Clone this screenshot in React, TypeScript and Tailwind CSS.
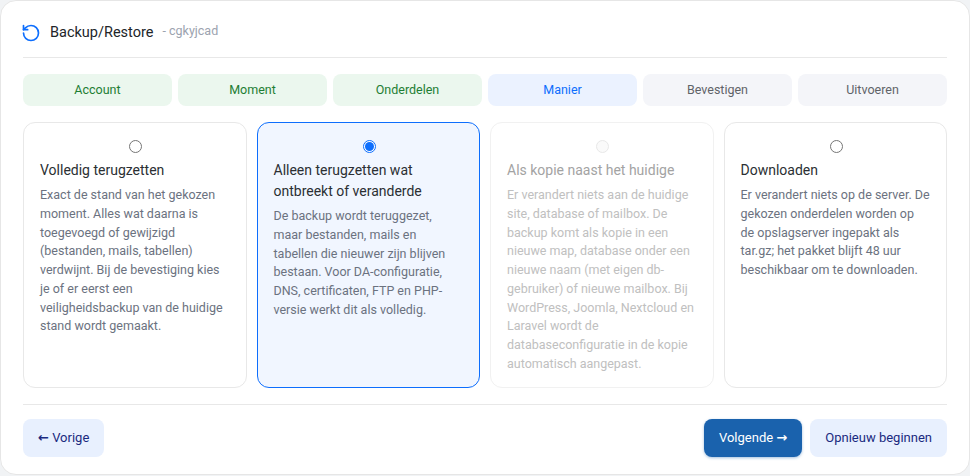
import { RotateCcw } from 'lucide-react';

const STEPS = [
  { label: 'Account', cls: 'bg-[#ebf7ee] text-[#1e7e34]' },
  { label: 'Moment', cls: 'bg-[#ebf7ee] text-[#1e7e34]' },
  { label: 'Onderdelen', cls: 'bg-[#ebf7ee] text-[#1e7e34]' },
  { label: 'Manier', cls: 'bg-[#ebf2ff] text-[#0d6efd]' },
  { label: 'Bevestigen', cls: 'bg-[#f4f5f9] text-[#5f6368]' },
  { label: 'Uitvoeren', cls: 'bg-[#f4f5f9] text-[#5f6368]' },
];

const OPTIONS = [
  {
    title: 'Volledig terugzetten',
    text: 'Exact de stand van het gekozen moment. Alles wat daarna is toegevoegd of gewijzigd (bestanden, mails, tabellen) verdwijnt. Bij de bevestiging kies je of er eerst een veiligheidsbackup van de huidige stand wordt gemaakt.',
  },
  {
    title: 'Alleen terugzetten wat ontbreekt of veranderde',
    text: 'De backup wordt teruggezet, maar bestanden, mails en tabellen die nieuwer zijn blijven bestaan. Voor DA-configuratie, DNS, certificaten, FTP en PHP-versie werkt dit als volledig.',
    selected: true,
  },
  {
    title: 'Als kopie naast het huidige',
    text: 'Er verandert niets aan de huidige site, database of mailbox. De backup komt als kopie in een nieuwe map, database onder een nieuwe naam (met eigen db-gebruiker) of nieuwe mailbox. Bij WordPress, Joomla, Nextcloud en Laravel wordt de databaseconfiguratie in de kopie automatisch aangepast.',
    disabled: true,
  },
  {
    title: 'Downloaden',
    text: 'Er verandert niets op de server. De gekozen onderdelen worden op de opslagserver ingepakt als tar.gz; het pakket blijft 48 uur beschikbaar om te downloaden.',
  },
];

function Radio({ selected, disabled }: { selected?: boolean; disabled?: boolean }) {
  if (selected) {
    return (
      <span className="ml-[2px] w-[13px] h-[13px] rounded-full border border-[#0d6efd] bg-white flex items-center justify-center">
        <span className="w-[9px] h-[9px] rounded-full bg-[#0d6efd]" />
      </span>
    );
  }
  return (
    <span
      className={`ml-[2px] w-[13px] h-[13px] rounded-full border ${
        disabled ? 'border-[#e8e8e8] bg-[#fafafa]' : 'border-[#767676] bg-white'
      }`}
    />
  );
}

export default function App() {
  return (
    <div className="w-[970px] h-[476px] bg-[#f1f3f5] font-['Roboto','DejaVu_Sans',sans-serif]">
      <div className="h-[475px] w-[970px] bg-white border border-[#e6e6e6] rounded-[16px] px-[22px] flex flex-col">
        {/* Header */}
        <div className="h-[57px] border-b border-[#e8e8e8] flex items-center pt-[7px] shrink-0">
          <RotateCcw className="w-[20px] h-[20px] text-[#0d6efd] -ml-[2px]" strokeWidth={2} />
          <span className="ml-[9px] text-[14.5px] text-[#212529]">Backup/Restore</span>
          <span className="ml-[9px] text-[12.5px] text-[#9ca3af] -mt-[3px]">- cgkyjcad</span>
        </div>

        {/* Steps */}
        <div className="flex gap-[6px] mt-[16px] shrink-0">
          {STEPS.map((step) => (
            <div
              key={step.label}
              className={`flex-1 h-[32px] rounded-[8px] flex items-center justify-center text-[12.5px] ${step.cls}`}
            >
              {step.label}
            </div>
          ))}
        </div>

        {/* Options */}
        <div className="grid grid-cols-4 gap-[10px] mt-[16px] h-[266px] shrink-0">
          {OPTIONS.map((opt) => (
            <div
              key={opt.title}
              className={`rounded-[12px] border px-[16px] pt-[17px] ${
                opt.selected
                  ? 'border-[#0d6efd] bg-[#f1f6ff]'
                  : opt.disabled
                    ? 'border-[#f1f1f1] bg-white'
                    : 'border-[#e8e8e8] bg-white'
              }`}
            >
              <div className="flex justify-center h-[13px]">
                <Radio selected={opt.selected} disabled={opt.disabled} />
              </div>
              <div
                className={`mt-[7px] text-[14px] leading-[21px] ${
                  opt.disabled ? 'text-[#a3a3a3]' : 'text-[#2b2f33]'
                }`}
              >
                {opt.title}
              </div>
              <div
                className={`mt-[5px] text-[12.5px] leading-[18.75px] ${
                  opt.disabled ? 'text-[#c0c0c0]' : 'text-[#6b7280]'
                }`}
              >
                {opt.text}
              </div>
            </div>
          ))}
        </div>

        {/* Footer */}
        <div className="mt-[16px] border-t border-[#e8e8e8] pt-[14px] flex items-start justify-between shrink-0">
          <button className="h-[38px] px-[15px] rounded-[8px] bg-[#e8f0fe] text-[#1a2a80] text-[13px]">
            <span className="font-bold">←</span> Vorige
          </button>
          <div className="flex gap-[8px]">
            <button className="h-[38px] px-[15px] rounded-[8px] bg-[#1a62ad] text-white text-[13px] shadow-[0_1px_3px_rgba(26,98,173,0.4)]">
              Volgende <span className="font-bold">→</span>
            </button>
            <button className="h-[38px] px-[15px] rounded-[8px] bg-[#e8f0fe] text-[#1a2a80] text-[13px]">
              Opnieuw beginnen
            </button>
          </div>
        </div>
      </div>
    </div>
  );
}
